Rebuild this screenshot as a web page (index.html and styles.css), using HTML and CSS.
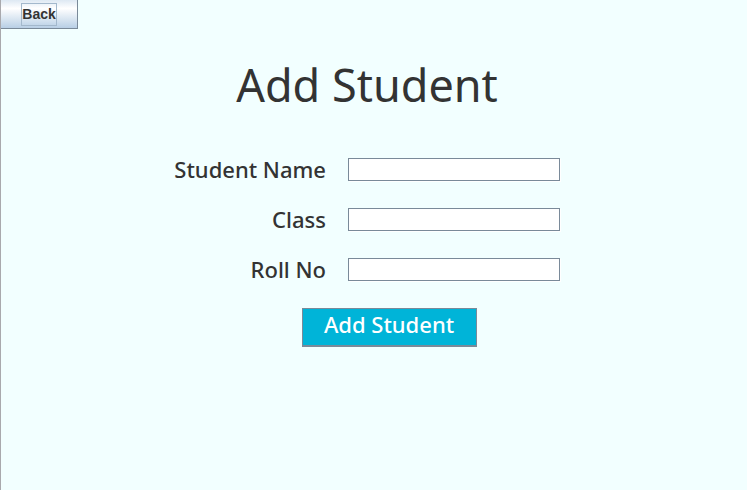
FILE: index.html
```html
<!DOCTYPE html>
<html lang="en">
<head>
<meta charset="utf-8">
<title>Add Student</title>
<link rel="stylesheet" href="styles.css">
</head>
<body>
<button class="back" type="button"><span class="back-label">Back</span></button>
<main class="content">
<h1 class="title">Add Student</h1>
<form class="form">
<label class="label" for="name">Student Name</label>
<input class="field" id="name" type="text">
<label class="label" for="class">Class</label>
<input class="field" id="class" type="text">
<label class="label" for="roll">Roll No</label>
<input class="field" id="roll" type="text">
<button class="submit" type="button">Add Student</button>
</form>
</main>
</body>
</html>
```
FILE: styles.css
```css
* { box-sizing: border-box; }
body {
  margin: 0;
  min-height: 100vh;
  border-left: 1px solid #a9a9ad;
  background: #f2ffff;
  color: #333;
  font-family: "Noto Sans", sans-serif;
}
.back {
  display: block;
  width: 77px;
  height: 29px;
  padding: 0;
  border: 1px solid #7a8a99;
  border-width: 0 1px 1px 0;
  background: linear-gradient(#dde8f3, #fff 30%, #b8cfe5);
  color: #333;
  font: bold 14px/21px "Liberation Sans", sans-serif;
}
.back-label {
  display: inline-block;
  border: 1px solid #a3b8cc;
}
.content {
  display: flex;
  flex-direction: column;
  align-items: center;
  padding: 26px 14px 0 0;
}
.title {
  margin: 0;
  font-size: 45px;
  font-weight: 400;
  line-height: 60px;
}
.form {
  display: grid;
  grid-template-columns: 152px 212px;
  gap: 20px 22px;
  align-items: center;
  margin-top: 39px;
}
.label {
  font-size: 22px;
  font-weight: 500;
  line-height: 30px;
  text-align: right;
  white-space: nowrap;
}
.field {
  width: 100%;
  height: 23px;
  border: 1px solid #7a8a99;
  background: #fff;
  box-shadow: 1px 1px #fff;
}
.submit {
  grid-column: 1 / -1;
  justify-self: center;
  width: 175px;
  height: 39px;
  margin: 4px 0 0 44px;
  padding: 0 0 6px;
  border: 1px solid #7a8a99;
  border-bottom-width: 2px;
  background: #00b4d8;
  color: #fff;
  font: 500 22px/30px "Noto Sans", sans-serif;
}
```
